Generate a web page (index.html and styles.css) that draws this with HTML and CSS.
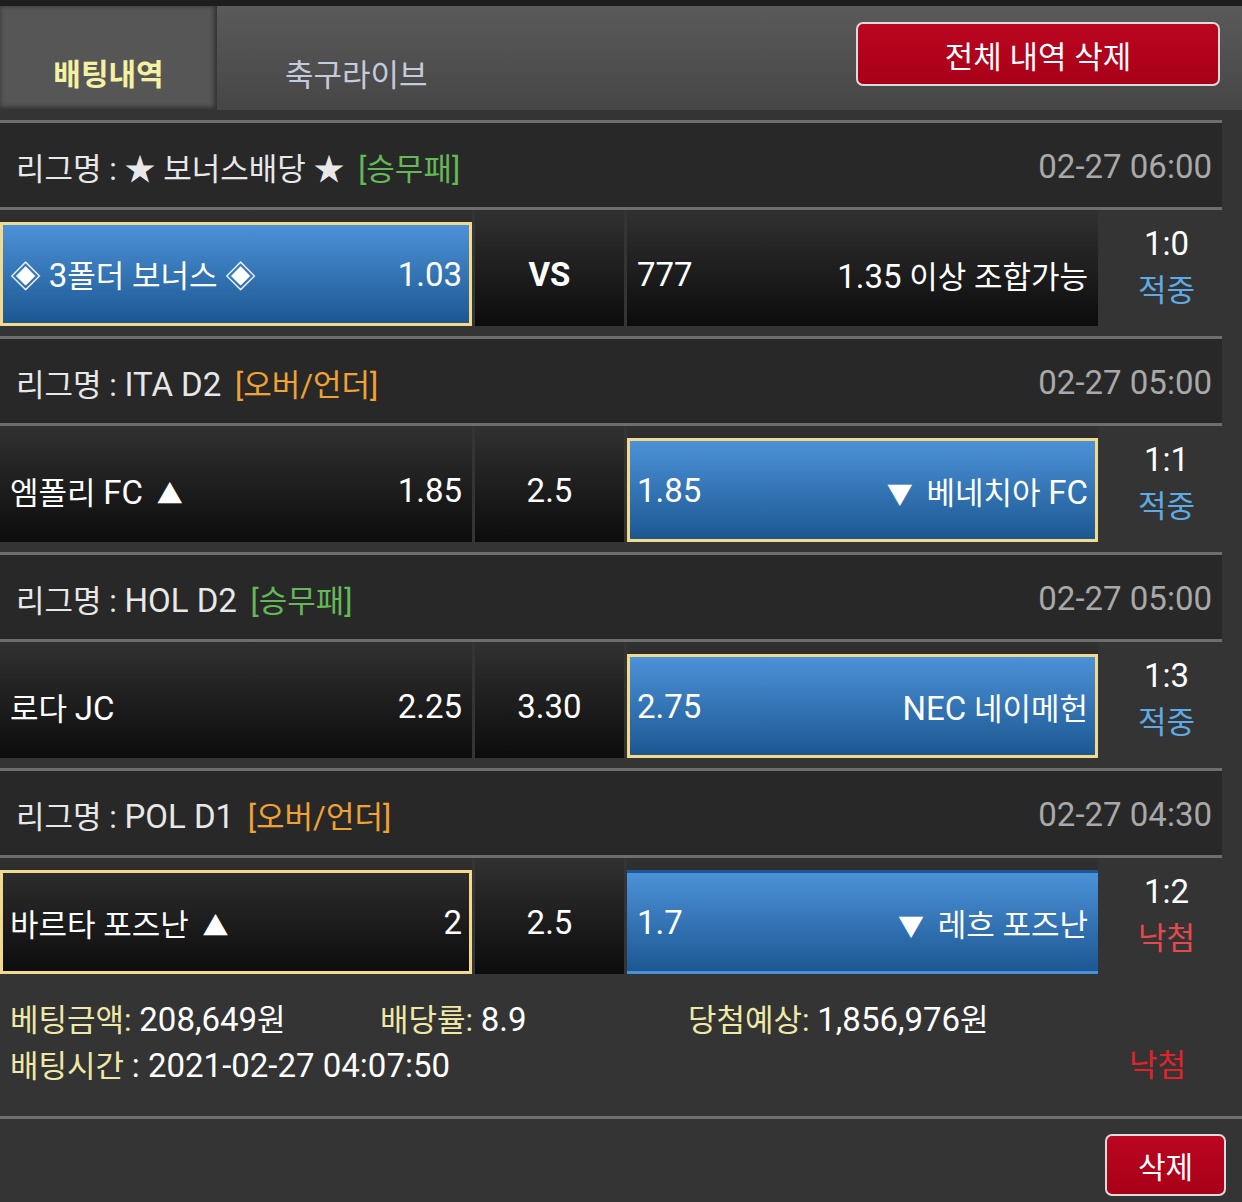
FILE: index.html
```html
<!DOCTYPE html>
<html lang="ko">
<head>
    <meta charset="UTF-8">
    <meta name="viewport" content="width=device-width, initial-scale=1.0">
    <title>배팅내역</title>
    <link rel="stylesheet" href="styles.css">
</head>
<body>

    <div class="topbar">
        <div class="tabs">
            <a class="tab active" href="#">배팅내역</a>
            <a class="tab" href="#">축구라이브</a>
        </div>
        <button class="btn-red btn-all">전체 내역 삭제</button>
    </div>

    <div class="league">
        <div class="league-head">
            <span>리그명 : ★ 보너스배당 ★ <span class="type-green">[승무패]</span></span>
            <span class="date n">02-27 06:00</span>
        </div>
        <div class="match">
            <div class="cell"><div class="box win pick"><span>◈ <span class="n">3</span>폴더 보너스 ◈</span><span class="n">1.03</span></div></div>
            <div class="cell"><div class="box mid"><b class="n">VS</b></div></div>
            <div class="cell"><div class="box"><span class="n">777</span><span><span class="n">1.35</span> 이상 조합가능</span></div></div>
            <div class="result"><span class="n">1:0</span><span class="hit">적중</span></div>
        </div>
    </div>

    <div class="league">
        <div class="league-head">
            <span>리그명 : <span class="n">ITA D2</span> <span class="type-orange">[오버/언더]</span></span>
            <span class="date n">02-27 05:00</span>
        </div>
        <div class="match">
            <div class="cell"><div class="box"><span>엠폴리 <span class="n">FC</span> <small class="up">▲</small></span><span class="n">1.85</span></div></div>
            <div class="cell"><div class="box mid n">2.5</div></div>
            <div class="cell"><div class="box win pick"><span class="n">1.85</span><span><small class="down">▼</small> 베네치아 <span class="n">FC</span></span></div></div>
            <div class="result"><span class="n">1:1</span><span class="hit">적중</span></div>
        </div>
    </div>

    <div class="league">
        <div class="league-head">
            <span>리그명 : <span class="n">HOL D2</span> <span class="type-green">[승무패]</span></span>
            <span class="date n">02-27 05:00</span>
        </div>
        <div class="match">
            <div class="cell"><div class="box"><span>로다 <span class="n">JC</span></span><span class="n">2.25</span></div></div>
            <div class="cell"><div class="box mid n">3.30</div></div>
            <div class="cell"><div class="box win pick"><span class="n">2.75</span><span><span class="n">NEC</span> 네이메헌</span></div></div>
            <div class="result"><span class="n">1:3</span><span class="hit">적중</span></div>
        </div>
    </div>

    <div class="league">
        <div class="league-head">
            <span>리그명 : <span class="n">POL D1</span> <span class="type-orange">[오버/언더]</span></span>
            <span class="date n">02-27 04:30</span>
        </div>
        <div class="match">
            <div class="cell"><div class="box pick"><span>바르타 포즈난 <small class="up">▲</small></span><span class="n">2</span></div></div>
            <div class="cell"><div class="box mid n">2.5</div></div>
            <div class="cell"><div class="box win"><span class="n">1.7</span><span><small class="down">▼</small> 레흐 포즈난</span></div></div>
            <div class="result"><span class="n">1:2</span><span class="miss">낙첨</span></div>
        </div>
    </div>

    <div class="summary">
        <div class="summary-row">
            <span><span class="label">베팅금액:</span> <span class="n">208,649</span>원</span>
            <span><span class="label">배당률:</span> <span class="n">8.9</span></span>
            <span><span class="label">당첨예상:</span> <span class="n">1,856,976</span>원</span>
        </div>
        <div class="summary-time">
            <span><span class="label">배팅시간</span> <span class="n">: 2021-02-27 04:07:50</span></span>
            <span class="lost">낙첨</span>
        </div>
    </div>

    <div class="actions">
        <button class="btn-red btn-delete">삭제</button>
    </div>

</body>
</html>
```

FILE: styles.css
```css
body {
    margin: 0;
    padding: 0;
    width: 1242px;
    background-color: #343434;
    color: #fff;
    font-family: Roboto, "Noto Sans CJK KR", sans-serif;
    font-size: 31px;
}
.n {
    font-size: 33px;
}
small {
    font-size: 26px;
}
small.up {
    margin-left: 6px;
}
small.down {
    margin-right: 6px;
}
.topbar {
    height: 104px;
    border-top: 6px solid #1e1e1e;
    background: linear-gradient(#5a5a5a, #464646);
    display: flex;
    justify-content: space-between;
    align-items: flex-start;
    margin-bottom: 10px;
}
.tabs {
    display: flex;
    height: 104px;
}
.tab {
    display: flex;
    align-items: center;
    height: 104px;
    box-sizing: border-box;
    padding-top: 28px;
    padding-left: 68px;
    color: #c3cbdc;
    text-decoration: none;
}
.tab.active {
    width: 217px;
    padding-left: 0;
    justify-content: center;
    background-color: #565656;
    box-shadow: inset -3px -3px 4px #333, inset 2px 2px 3px #474747;
    color: #f3f1a2;
    font-weight: bold;
    font-size: 30px;
}
.btn-red {
    background: linear-gradient(#bb0620, #a80018);
    color: #fff;
    border: 2px solid #dcdcdc;
    border-radius: 7px;
    font-family: Roboto, "Noto Sans CJK KR", sans-serif;
    cursor: pointer;
}
.btn-all {
    width: 364px;
    height: 64px;
    margin: 16px 22px 0 0;
    font-size: 31px;
}
.league {
    width: 1222px;
}
.league-head {
    height: 78px;
    background-color: #282828;
    border-top: 3px solid #6e6e6e;
    border-bottom: 3px solid #6e6e6e;
    display: flex;
    justify-content: space-between;
    align-items: center;
    padding: 4px 10px 2px 16px;
    color: #e8e8e8;
    white-space: nowrap;
}
.league-head .date {
    color: #a9a9a9;
}
.type-green {
    color: #62b956;
    margin-left: 6px;
}
.type-orange {
    color: #f0a233;
    margin-left: 6px;
}
.match {
    display: grid;
    grid-template-columns: 472px 149px 471px 1fr;
    column-gap: 3px;
    height: 126px;
}
.cell {
    height: 116px;
    background: linear-gradient(#313131, #0c0c0c);
    display: flex;
    flex-direction: column;
}
.box {
    flex: 1;
    margin-top: 12px;
    border: 3px solid transparent;
    display: flex;
    justify-content: space-between;
    align-items: center;
    padding: 0 7px;
    white-space: nowrap;
}
.box.mid {
    justify-content: center;
}
.box.win {
    background: linear-gradient(#4c92d8, #1c5792);
}
.box.pick {
    border-color: #f1d98e;
}
.result {
    display: flex;
    flex-direction: column;
    align-items: center;
    padding: 10px 0 0 10px;
    line-height: 47px;
}
.hit {
    color: #5eaae6;
}
.miss {
    color: #e5494e;
}
.summary {
    padding: 13px 0 27px 10px;
    line-height: 45px;
    border-bottom: 3px solid #6e6e6e;
}
.summary-row {
    display: grid;
    grid-template-columns: 370px 308px auto;
}
.summary-time {
    display: flex;
    justify-content: space-between;
    padding-right: 56px;
}
.label {
    color: #efe9a7;
}
.lost {
    color: #e2222b;
}
.actions {
    display: flex;
    justify-content: flex-end;
    padding: 15px 16px 0 0;
}
.btn-delete {
    width: 121px;
    height: 62px;
    font-size: 30px;
}
```
